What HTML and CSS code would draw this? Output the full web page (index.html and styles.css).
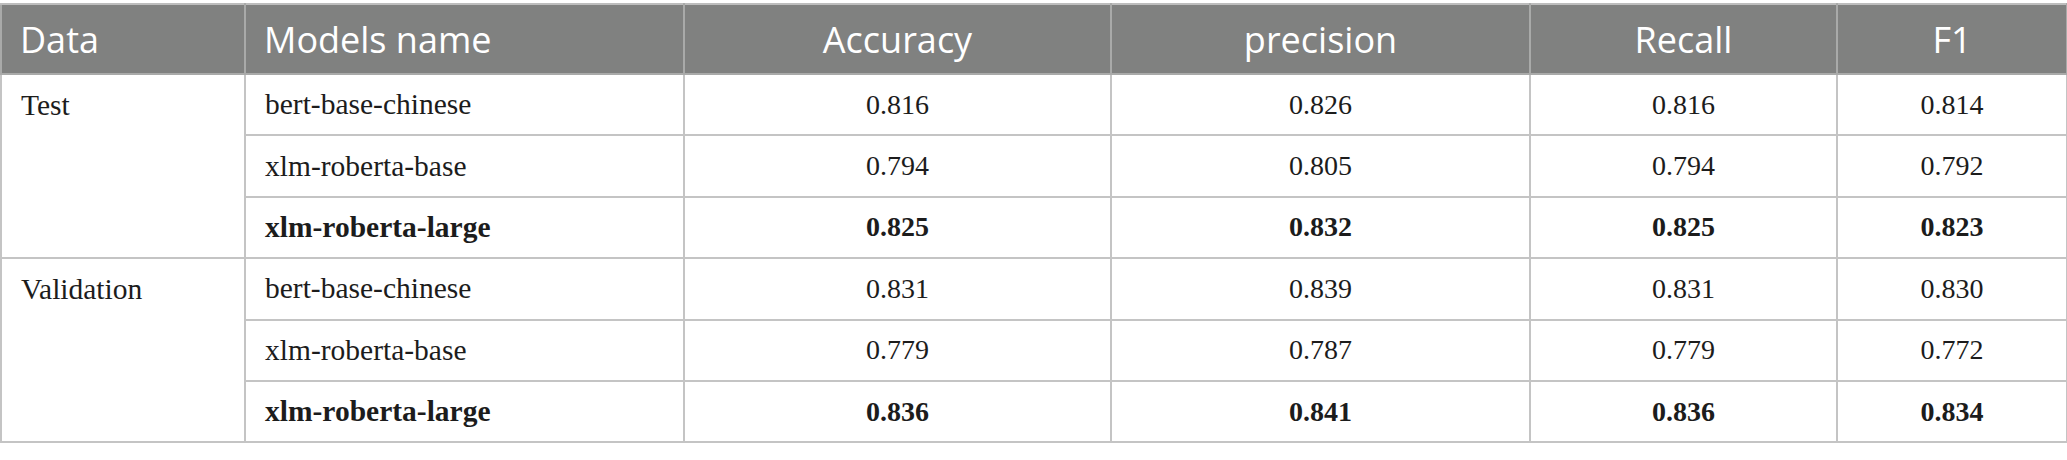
FILE: index.html
```html
<!DOCTYPE html>
<html lang="en">
<head>
<meta charset="utf-8">
<title>Model results</title>
<link rel="stylesheet" href="styles.css">
</head>
<body>
<table class="results">
  <colgroup>
    <col class="c-data">
    <col class="c-model">
    <col class="c-acc">
    <col class="c-prec">
    <col class="c-rec">
    <col class="c-f1">
  </colgroup>
  <thead>
    <tr>
      <th class="left">Data</th>
      <th class="left">Models name</th>
      <th>Accuracy</th>
      <th>precision</th>
      <th>Recall</th>
      <th>F1</th>
    </tr>
  </thead>
  <tbody>
    <tr>
      <td class="group" rowspan="3">Test</td>
      <td class="left">bert-base-chinese</td>
      <td>0.816</td><td>0.826</td><td>0.816</td><td>0.814</td>
    </tr>
    <tr>
      <td class="left">xlm-roberta-base</td>
      <td>0.794</td><td>0.805</td><td>0.794</td><td>0.792</td>
    </tr>
    <tr class="best">
      <td class="left">xlm-roberta-large</td>
      <td>0.825</td><td>0.832</td><td>0.825</td><td>0.823</td>
    </tr>
    <tr>
      <td class="group" rowspan="3">Validation</td>
      <td class="left">bert-base-chinese</td>
      <td>0.831</td><td>0.839</td><td>0.831</td><td>0.830</td>
    </tr>
    <tr>
      <td class="left">xlm-roberta-base</td>
      <td>0.779</td><td>0.787</td><td>0.779</td><td>0.772</td>
    </tr>
    <tr class="best">
      <td class="left">xlm-roberta-large</td>
      <td>0.836</td><td>0.841</td><td>0.836</td><td>0.834</td>
    </tr>
  </tbody>
</table>
</body>
</html>
```

FILE: styles.css
```css
html, body {
  margin: 0;
  padding: 0;
  background: #ffffff;
}

.results {
  margin-top: 3px;
  width: 2066px;
  table-layout: fixed;
  border-collapse: collapse;
  border: 2px solid #bdbdbd;
}

.c-data { width: 244px; }
.c-model { width: 439px; }
.c-acc { width: 427px; }
.c-prec { width: 419px; }
.c-rec { width: 307px; }
.c-f1 { width: 230px; }

.results th {
  height: 68px;
  padding: 0 18px;
  background: #808180;
  color: #ffffff;
  font-family: "Open Sans", "Noto Sans", sans-serif;
  font-weight: 400;
  font-size: 36px;
  text-align: center;
  vertical-align: middle;
  border: 2px solid #a9aaa9;
  border-top-color: #bdbdbd;
}

.results td {
  height: 59.4px;
  padding: 0 19px;
  color: #1c1c1c;
  font-family: "Liberation Serif", "Times New Roman", serif;
  font-size: 28px;
  text-align: center;
  vertical-align: middle;
  border: 2px solid #c4c4c4;
}

.results td.left {
  text-align: left;
  font-size: 29.5px;
}

.results th.left {
  text-align: left;
}

.results td.group {
  text-align: left;
  vertical-align: top;
  padding-top: 14px;
  font-size: 29.5px;
}

.best td {
  font-weight: 700;
}
```
